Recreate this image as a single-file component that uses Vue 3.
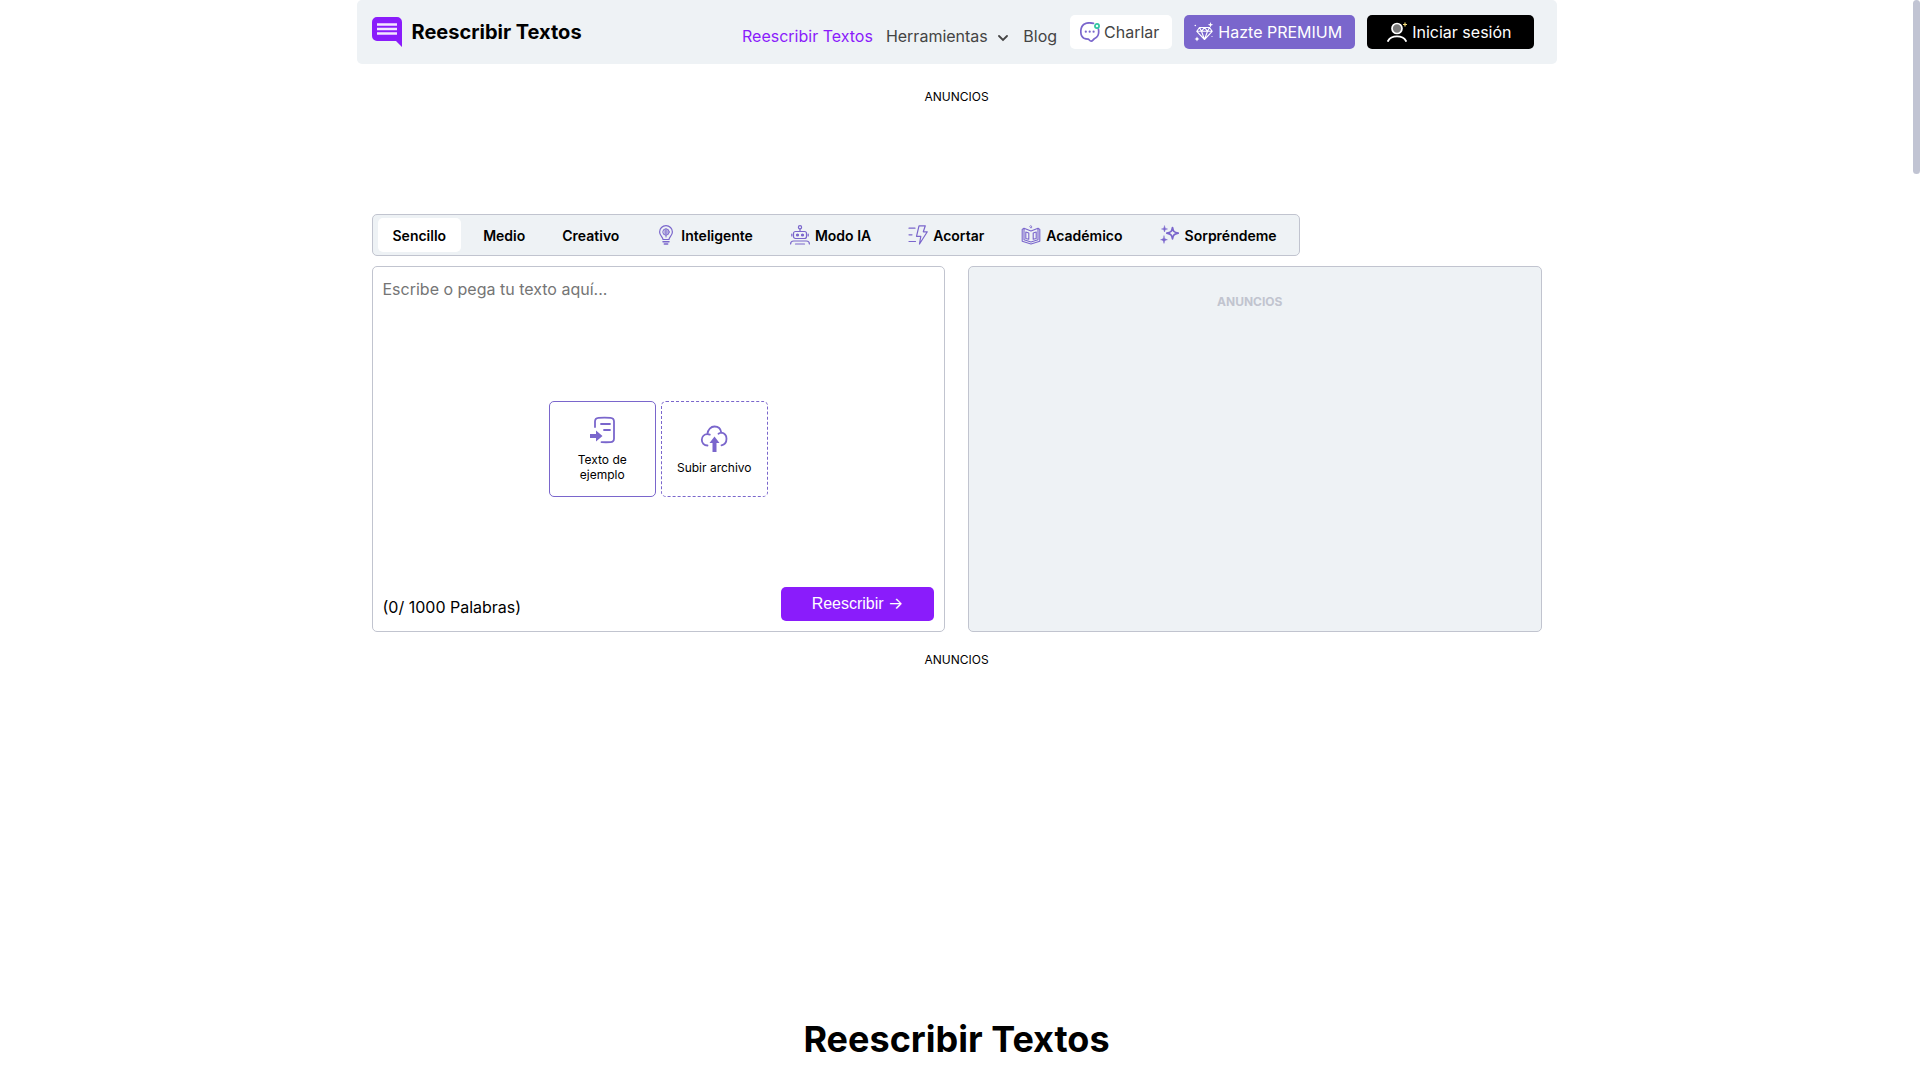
<script setup>
import { ref } from 'vue'

const modes = [
  { name: 'Sencillo' },
  { name: 'Medio' },
  { name: 'Creativo' },
  { name: 'Inteligente', icon: 'bulb' },
  { name: 'Modo IA', icon: 'robot' },
  { name: 'Acortar', icon: 'bolt' },
  { name: 'Académico', icon: 'book' },
  { name: 'Sorpréndeme', icon: 'sparkles' },
]
const active = ref('Sencillo')
const text = ref('')
</script>

<template>
  <div class="page">
    <header class="header">
      <a class="brand" href="#">
        <svg width="30" height="30" viewBox="0 0 30 30" aria-hidden="true">
          <path d="M5 0h20a5 5 0 0 1 5 5v25l-6-6H5a5 5 0 0 1-5-5V5a5 5 0 0 1 5-5z" fill="#8a1cfb" />
          <path d="M5 7.500h20M5 12h20M5 16.500h20" stroke="#f3e6ff" stroke-width="2.400" />
        </svg>
        <span>Reescribir Textos</span>
      </a>
      <nav class="nav">
        <a class="link current" href="#">Reescribir Textos</a>
        <a class="link" href="#">Herramientas
          <svg class="chevron" width="10" height="8" viewBox="0 0 10 8" aria-hidden="true">
            <path d="M1 2l4 4 4-4" fill="none" stroke="#444" stroke-width="1.800" stroke-linecap="round" />
          </svg>
        </a>
        <a class="link" href="#">Blog</a>
        <a class="pill chat" href="#">
          <svg width="20" height="20" viewBox="0 0 20 20" aria-hidden="true">
            <path d="M13.500 1.300C11 .7 6.500.7 4 2.200 1.500 4 .8 7 .8 9.500c0 3 1 5.500 3.200 6.800 1.500.8 3 .9 4.200.9 1 0 1.300 1.900 3 1.900 1.500 0 2-1.800 3.500-2.600 2.800-1.300 4-3.500 4-6.500 0-1 0-2-.3-3" fill="none" stroke="#7a66cc" stroke-width="1.700" stroke-linecap="round" />
            <circle cx="5.800" cy="9.700" r="1.100" fill="#7a66cc" /><circle cx="9.700" cy="9.700" r="1.100" fill="#7a66cc" /><circle cx="13.600" cy="9.700" r="1.100" fill="#7a66cc" />
            <circle cx="17" cy="4" r="2.100" fill="#eafff9" stroke="#2fc4a0" stroke-width="1.700" />
          </svg>
          Charlar
        </a>
        <a class="pill premium" href="#">
          <svg width="20" height="20" viewBox="0 0 20 20" aria-hidden="true">
            <g fill="none" stroke="#fff" stroke-width="1.100" stroke-linejoin="round">
              <path d="M5.500 5.500h10l2.700 3.800-7.700 8.200L2.800 9.300zM2.800 9.300h15.400M5.500 5.500l2 3.800 3 8.200 3-8.200 2-3.800M7.500 9.300l3-3.800 3 3.800" />
            </g>
            <path d="M16.500 0l.7 2 2 .7-2 .7-.7 2-.7-2-2-.7 2-.7zM3 14.500l.8 1.700 1.700.8-1.700.8L3 19.500l-.8-1.700L.5 17l1.700-.8z" fill="#fff" />
            <circle cx="1.300" cy="3.500" r=".8" fill="#fff" /><circle cx="18" cy="14.500" r=".6" fill="#fff" />
          </svg>
          Hazte PREMIUM
        </a>
        <a class="pill login" href="#">
          <svg width="20" height="20" viewBox="0 0 20 20" aria-hidden="true">
            <circle cx="10" cy="6.500" r="5" fill="#7a7a7a" stroke="#fff" stroke-width="1.700" />
            <path d="M1 19c1.600-3 5-4.600 9-4.600s7.400 1.600 9 4.600" fill="none" stroke="#fff" stroke-width="1.800" stroke-linecap="round" />
            <path d="M18 .5v4M16 2.500h4" stroke="#f4dc7a" stroke-width="1.200" />
          </svg>
          Iniciar sesión
        </a>
      </nav>
    </header>

    <p class="ad top">ANUNCIOS</p>

    <main class="tool">
      <div class="modes" role="tablist">
        <button
          v-for="m in modes"
          :key="m.name"
          class="mode"
          :class="{ active: m.name === active }"
          type="button"
          role="tab"
          :aria-selected="m.name === active"
          @click="active = m.name"
        >
          <svg v-if="m.icon" width="20" height="20" viewBox="0 0 20 20" fill="none" stroke="#7a66cc" stroke-width="1.200" stroke-linecap="round" stroke-linejoin="round" aria-hidden="true">
            <template v-if="m.icon === 'bulb'">
              <path d="M7 14.500c0-2.300-3.400-3.700-3.400-7.500a6.400 6.400 0 0 1 12.800 0c0 3.800-3.400 5.200-3.400 7.500z" />
              <path d="M7 16.700h6M8.300 19h3.400" stroke-width="1.500" />
              <circle cx="10" cy="7" r="3.200" stroke-width="1" />
              <path d="M10 4v8M8.500 6h1M10.800 6h1M8.500 8h1M10.800 8h1" stroke-width="1" />
            </template>
            <template v-else-if="m.icon === 'robot'">
              <circle cx="10" cy="2.200" r="1.600" />
              <path d="M10 4v2.500M5.500 6.500h9a2 2 0 0 1 2 2v3a2 2 0 0 1-2 2h-9a2 2 0 0 1-2-2v-3a2 2 0 0 1 2-2zM1.800 9v2M18.200 9v2M.6 19c0-2 1-3 3-3h12.800c2 0 3 1 3 3M5.500 19h9" />
              <circle cx="7.500" cy="10" r="1" fill="#7a66cc" /><circle cx="12.500" cy="10" r="1" fill="#7a66cc" />
            </template>
            <template v-else-if="m.icon === 'bolt'">
              <path d="M11 .8h6.300l-2 6h4L11.500 19l1.300-7.700H8.500zM1 3.200h6M1 9.800h3M1 16.500h6.500" />
            </template>
            <template v-else-if="m.icon === 'book'">
              <path d="M3 3.200L10 6l7-2.800M3 3.200L1.200 4.400v11.800L10 19l8.800-2.800V4.400L17 3.200v11.600L10 17l-7-2.200zM4.800 7l3 1v6.300l-3-.8zM15.200 7l-3 1v6.300l3-.8z" stroke-width="1.100" />
              <path d="M10 .8l1 1.200-1 1.200L9 2z" stroke-width=".8" />
            </template>
            <template v-else>
              <path d="M12.500 2.500c.7 4 1.500 4.800 5.700 5.700-4.200.9-5 1.700-5.700 5.700-.7-4-1.500-4.800-5.700-5.700 4.200-.9 5-1.700 5.700-5.700z" stroke-width="1.700" />
              <path d="M4.500 1c.4 2.200.8 2.600 3 3-2.200.4-2.600.8-3 3-.4-2.200-.8-2.600-3-3 2.200-.4 2.600-.8 3-3zM4 11c.4 2.700 1 3.300 3.400 3.700-2.400.4-3 1-3.400 3.700-.4-2.700-1-3.300-3.400-3.700C3 14.300 3.600 13.700 4 11z" fill="#7a66cc" stroke-width=".5" />
            </template>
          </svg>
          {{ m.name }}
        </button>
      </div>

      <div class="panels">
        <section class="panel editor">
          <textarea v-model="text" aria-label="Texto" placeholder="Escribe o pega tu texto aquí..."></textarea>
          <div class="starters">
            <button class="starter" type="button">
              <svg width="28" height="28" viewBox="0 0 28 28" fill="none" stroke="#7a66cc" stroke-width="1.800" stroke-linecap="round" aria-hidden="true">
                <path d="M7 11V5.500C7 3 8 2 10.500 1.800c4-.3 8-.3 12 0C25 2 26 3 26 5.500v17c0 2.500-1 3.500-3.500 3.600-3 .2-6 .2-9 0M13 8h9M16 14h6" />
                <path d="M2 18h6v-3.500l6.500 5.500-6.500 5.500V22H2z" fill="#7a66cc" stroke="none" />
              </svg>
              <span>Texto de ejemplo</span>
            </button>
            <button class="starter dashed" type="button">
              <svg width="28" height="28" viewBox="0 0 28 28" fill="none" stroke="#7a66cc" stroke-width="1.800" stroke-linecap="round" aria-hidden="true">
                <path d="M7.500 21.500C4 21.500 1.800 19 1.800 15.800s2.400-5.700 5.500-5.700C7.800 5.500 11 2.500 14.500 2.500c3.800 0 6.300 2.600 6.800 6.200 3.200.5 5.200 3 5.200 6 0 3.600-2.200 6-5 6.600M18.500 9.700c.9-.6 1.800-.9 2.800-1M7.300 10.100c1 0 1.800.2 2.500.5" />
                <path d="M12.500 28v-9H9.500l5-6.500 5 6.500h-3v9z" fill="#7a66cc" stroke="none" />
              </svg>
              <span>Subir archivo</span>
            </button>
          </div>
          <footer class="foot">
            <span class="count">(0/ 1000 Palabras)</span>
            <button class="go" type="button">Reescribir <span class="arrow">→</span></button>
          </footer>
        </section>
        <section class="panel result">
          <p class="ad-inner">ANUNCIOS</p>
        </section>
      </div>
    </main>

    <p class="ad bottom">ANUNCIOS</p>

    <h1>Reescribir Textos</h1>
    <div class="scroll-thumb"></div>
  </div>
</template>

<style>
body {
  margin: 0;
  background: #fff;
}
</style>

<style scoped>
.page {
  box-sizing: border-box;
  padding-right: 7px;
  font-family: Inter, "Liberation Sans", sans-serif;
  color: #000;
}
.page * {
  box-sizing: border-box;
}
.header {
  display: flex;
  justify-content: space-between;
  max-width: 1200px;
  height: 64px;
  margin: 0 auto;
  padding: 15px 23px 15px 15px;
  background: #eef2f5;
  border-radius: 5px;
}
.header a {
  text-decoration: none;
}
.brand {
  display: flex;
  align-items: center;
  gap: 10px;
  color: #000;
  font-size: 20px;
  font-weight: 700;
  line-height: 34px;
}
.nav {
  display: flex;
  align-items: center;
  gap: 12px;
}
.link {
  padding: 8px 1px 0 0;
  color: #444;
  font-size: 16px;
  line-height: 26px;
}
.current {
  color: #8a1cfb;
}
.chevron {
  margin: 0 2px 0 6px;
}
.pill {
  display: flex;
  align-items: center;
  gap: 4px;
  height: 34px;
  padding: 0 13px 0 10px;
  border-radius: 5px;
  color: #fff;
  font-size: 16px;
}
.header .chat {
  background: #fff;
  color: #444;
}
.premium {
  background: #7a66cc;
}
.login {
  padding: 0 22px 0 20px;
  gap: 5px;
  background: #000;
}
.ad {
  margin: 0;
  font-size: 12px;
  line-height: 16px;
  text-align: center;
}
.top {
  padding: 25px 0 109px;
}
.bottom {
  padding: 20px 0 343px;
}
.tool {
  max-width: 1170px;
  margin: 0 auto;
}
.modes {
  display: flex;
  gap: 7px;
  width: fit-content;
  padding: 3px 7px 3px 5px;
  background: #eef2f5;
  border: 1px solid #c1c4cf;
  border-radius: 5px;
}
.mode {
  display: flex;
  align-items: center;
  gap: 5px;
  height: 34px;
  padding: 0 15px;
  background: none;
  border: 0;
  border-radius: 5px;
  color: #000;
  font: 600 14px Inter, "Liberation Sans", sans-serif;
}
.active {
  background: #fff;
}
.panels {
  display: grid;
  grid-template-columns: 1fr 1fr;
  gap: 23px;
  margin-top: 10px;
}
.panel {
  height: 366px;
  border: 1px solid #c1c4cf;
  border-radius: 5px;
}
.editor {
  display: flex;
  flex-direction: column;
  padding: 10px;
}
textarea {
  height: 124px;
  padding: 0;
  border: 0;
  outline: 0;
  resize: none;
  font: 16px/24px Inter, "Liberation Sans", sans-serif;
}
textarea::placeholder {
  color: #757575;
}
.starters {
  display: flex;
  justify-content: center;
  gap: 5px;
}
.starter {
  display: flex;
  flex-direction: column;
  align-items: center;
  justify-content: center;
  gap: 8px;
  width: 107px;
  height: 96px;
  padding: 0 12px;
  background: #fff;
  border: 1px solid #7a66cc;
  border-radius: 5px;
  color: #000;
  font: 12px/15px Inter, "Liberation Sans", sans-serif;
}
.dashed {
  border-style: dashed;
}
.foot {
  display: flex;
  align-items: flex-end;
  justify-content: space-between;
  margin-top: auto;
}
.count {
  font-size: 16px;
  line-height: 28px;
}
.go {
  width: 153px;
  height: 34px;
  padding: 0 0 2px;
  background: #8a1cfb;
  border: 0;
  border-radius: 5px;
  color: #fff;
  font: 16px "Liberation Sans", sans-serif;
}
.arrow {
  font: 16px Inter, sans-serif;
}
.result {
  background: #eef2f5;
}
.ad-inner {
  margin: 0;
  padding: 27px 10px 0 0;
  color: #c1c4cf;
  font-size: 12px;
  font-weight: 700;
  line-height: 16px;
  text-align: center;
}
h1 {
  margin: 0;
  padding-bottom: 13px;
  font-size: 36px;
  font-weight: 700;
  line-height: 56px;
  text-align: center;
}
.scroll-thumb {
  position: absolute;
  top: 0;
  right: 0;
  width: 7px;
  height: 174px;
  background: #c1c4d3;
  border-radius: 4px;
}
</style>
